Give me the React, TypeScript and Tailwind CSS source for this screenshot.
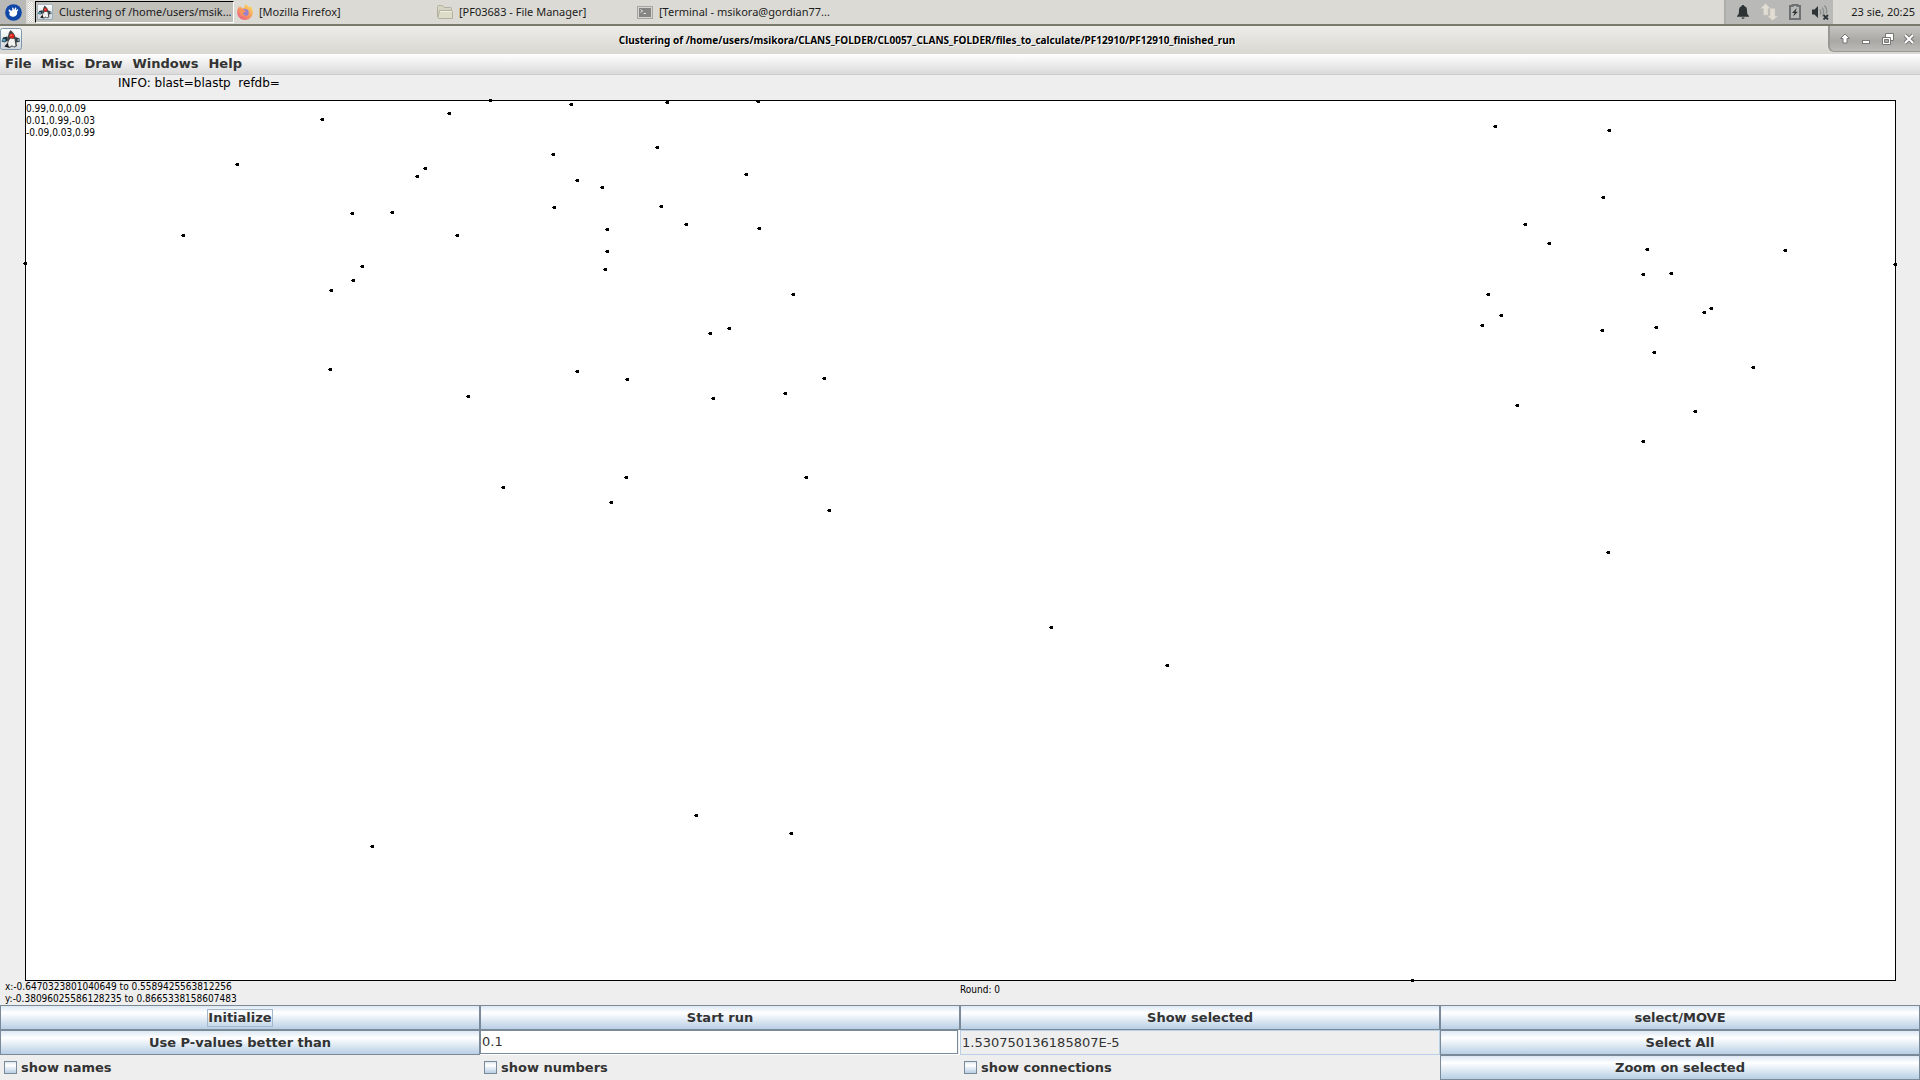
import React, { useState } from "react";

const PLOT_WIDTH = 1870;
const PLOT_HEIGHT = 880;

/* Sequence positions, measured from the plot's top left corner. */
const POINTS: [number, number][] = [
  [465, 0], [546, 4], [424, 13], [297, 19], [212, 64], [400, 68], [392, 76], [528, 54],
  [552, 80], [577, 87], [529, 107], [327, 113], [367, 112], [582, 129], [158, 135], [432, 135],
  [582, 151], [580, 169], [337, 166], [328, 180], [306, 190], [0, 163], [305, 269], [552, 271],
  [602, 279], [443, 296], [601, 377], [478, 387], [586, 402], [642, 2], [733, 1], [632, 47],
  [721, 74], [636, 106], [661, 124], [734, 128], [768, 194], [704, 228], [685, 233], [799, 278],
  [760, 293], [688, 298], [781, 377], [804, 410], [1470, 26], [1584, 30], [1578, 97], [1500, 124],
  [1524, 143], [1622, 149], [1760, 150], [1870, 164], [1618, 174], [1646, 173], [1463, 194],
  [1476, 215], [1457, 225], [1577, 230], [1631, 227], [1679, 212], [1686, 208], [1629, 252],
  [1728, 267], [1492, 305], [1670, 311], [1618, 341], [1583, 452], [1026, 527], [1142, 565],
  [671, 715], [766, 733], [347, 746], [1387, 880],
];

const MATRIX = ["0.99,0.0,0.09", "0.01,0.99,-0.03", "-0.09,0.03,0.99"];
const MENUS = ["File", "Misc", "Draw", "Windows", "Help"];

function DukeIcon({ className }: { className: string }) {
  return (
    <svg viewBox="0 0 22 22" className={className} aria-hidden="true">
      <defs>
        <linearGradient id="duke-bg" x1="0" y1="0" x2="0" y2="1">
          <stop offset="0" stopColor="#ffffff" />
          <stop offset="1" stopColor="#cfd6dc" />
        </linearGradient>
      </defs>
      <rect x="0.5" y="0.5" width="21" height="21" rx="2" fill="url(#duke-bg)" stroke="#7d98ae" />
      <path d="M7.500 8.500L3 9.500 1.500 13.500l3 1 3.500-2z" fill="#1c3038" />
      <path d="M2.500 11h3v2.500h-3z" fill="#5ea3c4" />
      <path d="M15.500 9l4 1.500.5 3-3.500 1-2-3z" fill="#30393d" />
      <path d="M17.500 11h2v2h-2z" fill="#78a9c0" />
      <path d="M10.500 2c2.500 2 5 5 5.500 9l1 7-2.500 1.500-2.500-1-2.500 1.500-5-1.500 3-4C7.500 10 8 5 10.500 2z" fill="#46464a" />
      <path d="M10.500 10.500l4 .5 1 7-2 .5-1.500-1.300-2.500 1.600-1.500-.5c-.3-3 .5-6 2.500-7.800z" fill="#f2f2f0" />
      <path d="M4.500 18.500l3.500-3 1 4z" fill="#1c1c1e" />
      <circle cx="11.800" cy="8" r="2.500" fill="#d8231d" />
      <circle cx="11.200" cy="7.300" r="0.900" fill="#ff7a68" />
    </svg>
  );
}

function XfceIcon() {
  return (
    <svg viewBox="0 0 18 18" className="size-[17px] shrink-0" aria-hidden="true">
      <circle cx="9" cy="9" r="8.800" fill="#0f47a8" />
      <path
        d="M4 6.200c.5-.7 1.300-.5 1.700.2l.6 1c.5-.4 1-.6 1.600-.8l-.4-2c-.1-1 1.100-1.100 1.500-.2l.7 1.900.9-2c.5-.8 1.500-.5 1.400.4l-.4 1.900 1.300-.9c.8-.4 1.400.3.9 1l-1 1.500c.5 2.200-.5 4.300-2.700 5-2.400.7-5-.1-5.400-2-.2-.9.100-1.700.5-2.400L4 7.600c-.3-.5-.3-1 0-1.400z"
        fill="#ffffff"
      />
    </svg>
  );
}

function FirefoxIcon() {
  return (
    <svg viewBox="0 0 16 16" className="size-4 shrink-0" aria-hidden="true">
      <defs>
        <linearGradient id="fx-body" x1="0.9" y1="0.1" x2="0.2" y2="1">
          <stop offset="0" stopColor="#fbdc62" />
          <stop offset="0.5" stopColor="#f79a5c" />
          <stop offset="1" stopColor="#ee5f86" />
        </linearGradient>
      </defs>
      <path
        d="M9 .3c1.500 1 2.300 1.900 2.700 3 1-.1 1.700-.7 1.800-1.200 1.600 1.800 2.400 4 2.300 6.300-.1 4.300-3.500 7.500-7.800 7.500S.2 12.600.2 8.400C.2 6 1 3.800 2.200 2.300l.6 1.500L4 2.600l.9 1.700C6 4 7 4 7.600 3.800 7.300 2.500 7.900 1.200 9 .3z"
        fill="url(#fx-body)"
      />
      <circle cx="8.200" cy="8.500" r="3.500" fill="#9a7fd0" />
      <path d="M2.600 6.200c1.500-1 3.400-1 4.700.1L9 7.200C8.400 8.300 7 8 6.300 8.900c-.4 1.500.8 2.500 2.300 2.500-2.500 1.500-5.500-.1-6-2.600z" fill="#f8955d" />
    </svg>
  );
}

function FolderIcon() {
  return (
    <svg viewBox="0 0 16 14" className="h-[14px] w-4 shrink-0" aria-hidden="true">
      <path d="M.5 12V1.500q0-1 1-1h4l1.500 2h6.500q1 0 1 1V12" fill="#d6d5c4" stroke="#b3b2a0" />
      <path d="M2.500 5.500h12q1 0 1 1V13.500h-13.500q-1 0-1-1z" fill="#dddcc8" stroke="#b3b2a0" />
      <path d="M3 6.500h11.500" stroke="#f2f1e4" />
    </svg>
  );
}

function TerminalIcon() {
  return (
    <svg viewBox="0 0 16 13" className="h-[13px] w-4 shrink-0" aria-hidden="true">
      <rect x="0.500" y="0.500" width="15" height="12" fill="#d4d4d2" stroke="#a5a5a2" />
      <rect x="2" y="2" width="12" height="9" fill="#858584" />
      <path d="M3.500 3.500l2 1.500-2 1.500M6.500 7.500h2.500" fill="none" stroke="#e6e6e6" />
    </svg>
  );
}

const TASKS = [
  { title: "Clustering of /home/users/msik...", icon: <DukeIcon className="size-4 shrink-0" />, active: true },
  { title: "[Mozilla Firefox]", icon: <FirefoxIcon />, active: false },
  { title: "[PF03683 - File Manager]", icon: <FolderIcon />, active: false },
  { title: "[Terminal - msikora@gordian77...", icon: <TerminalIcon />, active: false },
];

function Taskbar() {
  return (
    <header className="flex h-[26px] shrink-0 border-b-2 border-[#7a7a6c] bg-[#dbdad5] font-['Noto_Sans',sans-serif] text-[11px] text-[#1c1c1c]">
      <button aria-label="Applications" className="flex w-[26px] items-center justify-center bg-[#b9b9b7]">
        <XfceIcon />
      </button>
      <div className="mx-[2px] my-[2px] w-[5px] bg-[repeating-conic-gradient(#ffffff_0_25%,#d2d1cc_0_50%)] bg-size-[2px_2px]" />
      <nav className="flex min-w-0 flex-1">
        {TASKS.map((task) => (
          <button
            key={task.title}
            className={
              task.active
                ? "my-px flex w-[199px] items-center gap-[6px] border border-t-black border-r-white border-b-white border-l-black bg-[#c1c0bb] pl-px"
                : "flex w-[200px] items-center gap-[6px] pl-[3px]"
            }
          >
            {task.icon}
            <span className="whitespace-nowrap">{task.title}</span>
          </button>
        ))}
      </nav>
      <div className="flex w-[109px] items-center justify-between border-l-2 border-[#adadab] bg-[#b9b9b7] pr-1 pl-[11px]">
        <svg viewBox="0 0 12 14" className="h-[14px] w-3" aria-label="Notifications">
          <path d="M6 0c.8 0 1.200.5 1.200 1.100C9.200 1.700 10 3.300 10 5.500c0 3 .5 4.300 2 5.500v.800H0V11c1.500-1.200 2-2.500 2-5.500 0-2.200.8-3.800 2.800-4.400C4.800.5 5.200 0 6 0zM4.500 12.500h3c0 .8-.6 1.300-1.500 1.300s-1.500-.5-1.500-1.300z" fill="#2e3436" />
        </svg>
        <svg viewBox="0 0 18 18" className="size-[18px]" aria-label="Network">
          <path d="M5.500.5l5 5H8V12H3.500V5.500h-3z" fill="#e2ddd3" stroke="#c9c5bd" strokeWidth="0.500" />
          <path d="M12.500 17.500l-5-4.500H10V5.500h5V13h3z" fill="#e2ddd3" stroke="#c9c5bd" strokeWidth="0.500" />
        </svg>
        <svg viewBox="0 0 12 16" className="h-4 w-3" aria-label="Battery">
          <path d="M1 2h2.500V1h5v1H11v13H1z" fill="none" stroke="#6d7173" strokeWidth="2" />
          <path d="M7.800 4L3 9h2.500L4 12.500 9 7.800H6.500z" fill="#2e3436" />
        </svg>
        <svg viewBox="0 0 17 16" className="h-4 w-[17px]" aria-label="Volume muted">
          <path d="M0 5.500h2.500L6 2v12l-3.500-3.500H0z" fill="#2e3436" />
          <path d="M8 5.500q1.500 2.500 0 5M10.200 3.500q3 4.500 0 9M12.500 1.500q3.800 5 1.500 8" fill="none" stroke="#8b8e8f" strokeWidth="1.300" />
          <path d="M11.500 11l4.500 4.500m0-4.500l-4.500 4.500" stroke="#2e3436" strokeWidth="1.800" />
        </svg>
      </div>
      <time className="flex w-[87px] items-center justify-end pr-[5px] whitespace-nowrap">23 sie, 20:25</time>
    </header>
  );
}

function TitleBar() {
  return (
    <div className="flex h-7 shrink-0 bg-linear-to-b from-[#edece8] to-[#d8d7d2]">
      <div className="flex w-[92px] items-start pt-[2px]">
        <DukeIcon className="size-[22px]" />
      </div>
      <h1 className="flex flex-1 items-center justify-center pr-[66px] font-['Noto_Sans',sans-serif] text-[10px] font-bold whitespace-nowrap text-black [text-shadow:1px_1px_0_#ffffff]">
        Clustering of /home/users/msikora/CLANS_FOLDER/CL0057_CLANS_FOLDER/files_to_calculate/PF12910/PF12910_finished_run
      </h1>
      <div className="flex h-[26px] w-[92px] items-center justify-around rounded-bl-md border-b border-l-2 border-[#989894] bg-linear-to-b from-[#c6c5c1] via-[#a9a8a5] via-60% to-[#bcbbb7] pl-[4px]">
        <button aria-label="Shade">
          <svg viewBox="0 0 12 12" className="size-3">
            <path d="M6 1l4.500 4.500H8V10H4V5.500H1.500z" fill="#ffffff" stroke="#777774" />
          </svg>
        </button>
        <button aria-label="Minimize">
          <svg viewBox="0 0 12 12" className="size-3">
            <rect x="2.500" y="7.500" width="7" height="3" fill="#ffffff" stroke="#777774" />
          </svg>
        </button>
        <button aria-label="Restore">
          <svg viewBox="0 0 12 12" className="size-3">
            <path d="M3.500.5h8v7h-8z" fill="#ffffff" stroke="#777774" />
            <path d="M.5 4.500h8v7h-8z" fill="#ffffff" stroke="#777774" />
            <path d="M2.500 6.500h4v3h-4z" fill="#a9a8a5" stroke="#777774" />
          </svg>
        </button>
        <button aria-label="Close">
          <svg viewBox="0 0 12 12" className="size-3">
            <path d="M2 2l8 8m0-8l-8 8" stroke="#777774" strokeWidth="4" />
            <path d="M2 2l8 8m0-8l-8 8" stroke="#ffffff" strokeWidth="2" />
          </svg>
        </button>
      </div>
    </div>
  );
}

function MenuBar() {
  return (
    <nav className="flex h-[21px] shrink-0 items-center border-b border-[#cccccc] bg-linear-to-b from-white to-[#dadada]">
      {MENUS.map((menu) => (
        <button key={menu} className="px-[5px] text-[13px] leading-4 font-bold text-[#333333]">
          {menu}
        </button>
      ))}
    </nav>
  );
}

function Plot() {
  return (
    <div className="relative mr-6 ml-[25px] flex-1 border border-black bg-white">
      <div className="absolute -top-px -right-px -bottom-px -left-px pr-px pb-px">
        <div className="relative size-full">
          {POINTS.map(([x, y]) => (
            <svg
              key={`${x}-${y}`}
              viewBox="0 0 4 3"
              shapeRendering="crispEdges"
              className="absolute -mt-px -ml-[2px] h-[3px] w-1"
              style={{ left: `${(x / PLOT_WIDTH) * 100}%`, top: `${(y / PLOT_HEIGHT) * 100}%` }}
            >
              <path d="M1 0h3v3H1V2H0V1h1z" fill="#000000" />
            </svg>
          ))}
        </div>
      </div>
      <div className="pt-[2px] font-['DejaVu_Sans_Condensed','DejaVu_Sans',sans-serif] text-[10px] leading-3 text-black">
        {MATRIX.map((row) => (
          <p key={row}>{row}</p>
        ))}
      </div>
    </div>
  );
}

function PushButton({ label, focused = false }: { label: string; focused?: boolean }) {
  return (
    <button className="flex h-[25px] items-center justify-center border border-[#7a8a99] bg-linear-to-b from-[#dde8f3] via-white via-30% to-[#b8cfe5] text-[13px] leading-4 font-bold text-[#333333]">
      <span className={focused ? "outline outline-[#a3b8cc]" : ""}>{label}</span>
    </button>
  );
}

function CheckBox({ label }: { label: string }) {
  const [checked, setChecked] = useState(false);
  return (
    <label className="flex h-[25px] items-center gap-1 pl-1 text-[13px] leading-4 font-bold text-[#333333]">
      <input
        type="checkbox"
        checked={checked}
        onChange={(event) => setChecked(event.target.checked)}
        className="size-[13px] appearance-none border border-[#7a8a99] bg-linear-to-b from-[#dde8f3] via-white via-30% to-[#b8cfe5] checked:bg-none checked:bg-[#7a8a99]"
      />
      {label}
    </label>
  );
}

export default function App() {
  const [cutoff, setCutoff] = useState("0.1");
  return (
    <div className="flex min-h-screen flex-col bg-[#eeeeee] font-['DejaVu_Sans',sans-serif]">
      <Taskbar />
      <TitleBar />
      <MenuBar />
      <p className="h-[25px] shrink-0 pl-[118px] text-xs leading-4 whitespace-pre text-black">
        {"INFO: blast=blastp  refdb="}
      </p>
      <Plot />
      <div className="grid h-6 shrink-0 grid-cols-2 font-['DejaVu_Sans_Condensed','DejaVu_Sans',sans-serif] text-[10px] leading-3 text-black">
        <div className="pl-[5px]">
          <p>x:-0.6470323801040649 to 0.5589425563812256</p>
          <p>y:-0.38096025586128235 to 0.8665338158607483</p>
        </div>
        <p className="pt-[3px]">Round: 0</p>
      </div>
      <main className="grid shrink-0 grid-cols-4">
        <PushButton label="Initialize" focused />
        <PushButton label="Start run" />
        <PushButton label="Show selected" />
        <PushButton label="select/MOVE" />
        <PushButton label="Use P-values better than" />
        <div className="flex h-[25px] border-r border-b border-white pr-px">
          <input
            aria-label="P-value cutoff"
            value={cutoff}
            onChange={(event) => setCutoff(event.target.value)}
            className="w-full border border-[#7a8a99] bg-white px-px text-[13px] text-[#333333] outline-none"
          />
        </div>
        <input
          aria-label="Current value"
          readOnly
          value="1.530750136185807E-5"
          className="h-[25px] w-full border border-[#b8cfe5] bg-[#eeeeee] px-px text-[13px] text-[#333333] outline-none"
        />
        <PushButton label="Select All" />
        <CheckBox label="show names" />
        <CheckBox label="show numbers" />
        <CheckBox label="show connections" />
        <PushButton label="Zoom on selected" />
      </main>
    </div>
  );
}
